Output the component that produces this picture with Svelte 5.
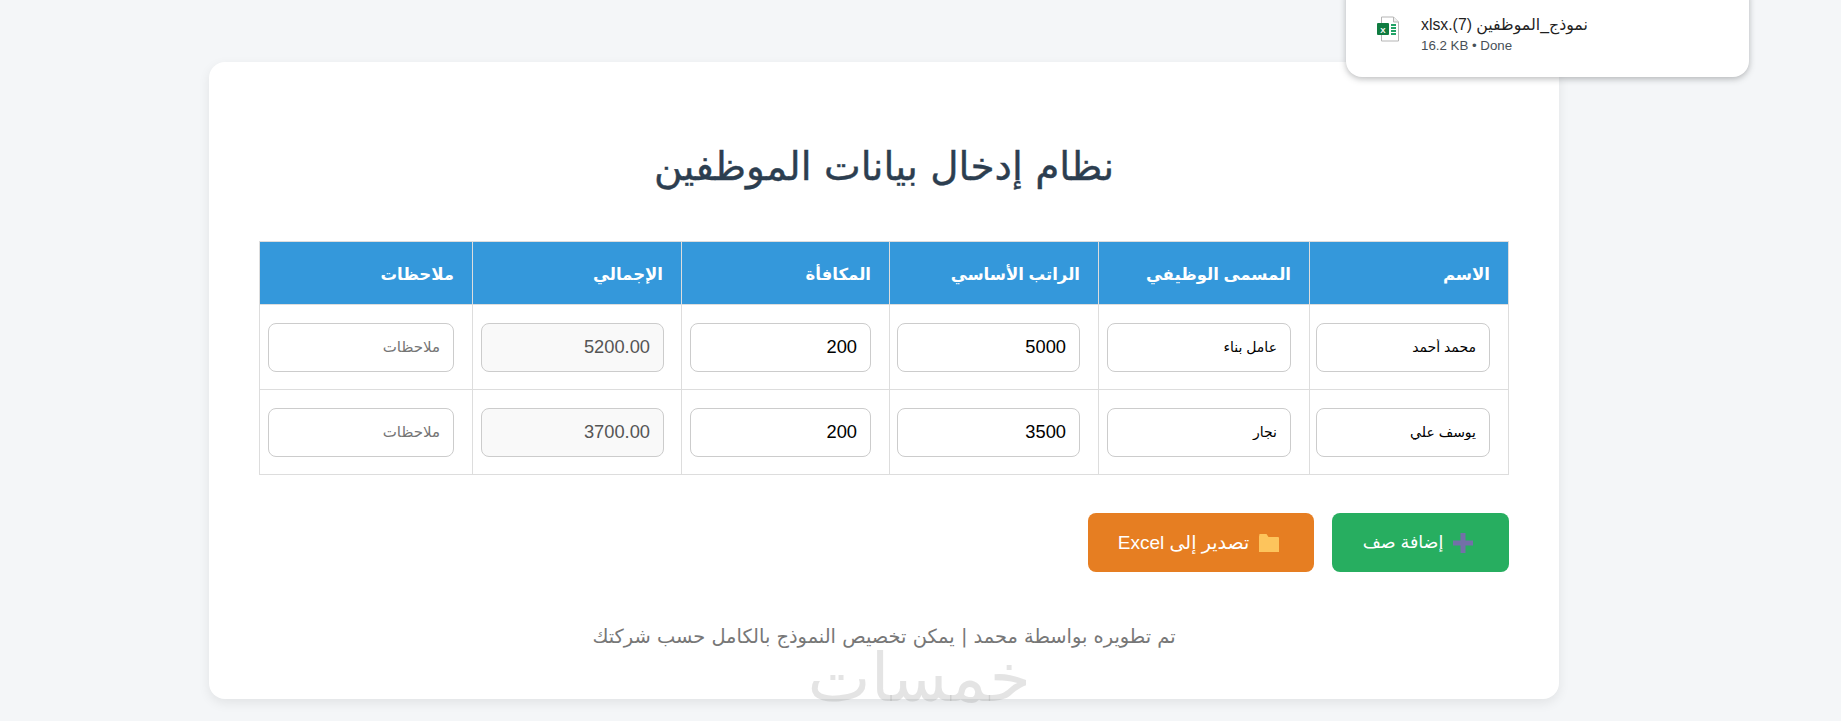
<script>
  const rows = [
    { name: 'محمد أحمد', job: 'عامل بناء', salary: '5000', bonus: '200', total: '5200.00' },
    { name: 'يوسف علي', job: 'نجار', salary: '3500', bonus: '200', total: '3700.00' }
  ];
  const headers = ['الاسم', 'المسمى الوظيفي', 'الراتب الأساسي', 'المكافأة', 'الإجمالي', 'ملاحظات'];
</script>

<div class="page">
  <div class="card" dir="rtl">
    <h1>نظام إدخال بيانات الموظفين</h1>

    <table>
      <thead>
        <tr>
          {#each headers as h}
            <th>{h}</th>
          {/each}
        </tr>
      </thead>
      <tbody>
        {#each rows as row}
          <tr>
            <td><input type="text" value={row.name} /></td>
            <td><input type="text" value={row.job} /></td>
            <td><input class="num" type="text" value={row.salary} /></td>
            <td><input class="num" type="text" value={row.bonus} /></td>
            <td><input class="num total" type="text" value={row.total} readonly /></td>
            <td><input type="text" placeholder="ملاحظات" /></td>
          </tr>
        {/each}
      </tbody>
    </table>

    <div class="actions">
      <button class="add">
        <svg width="22" height="22" viewBox="0 0 22 22"><path d="M8.5 1h5v7.5H21v5h-7.5V21h-5v-7.5H1v-5h7.5z" fill="#7370a8" /></svg>
        <span>إضافة صف</span>
      </button>
      <button class="export">
        <svg width="22" height="20" viewBox="0 0 22 20"><path d="M1 3.5 1.5 1h7l2 3H20.5l.5 1v14H1z" fill="#fdc45c" /></svg>
        <span>تصدير إلى Excel</span>
      </button>
    </div>

    <p class="footer">تم تطويره بواسطة محمد | يمكن تخصيص النموذج بالكامل حسب شركتك</p>
  </div>

  <div class="watermark" dir="rtl">خمسات</div>

  <div class="download">
    <svg width="24" height="26" viewBox="0 0 24 26">
      <path d="M5.5 1h12l5 5v19h-17z" fill="#fff" stroke="#b5b5b5" />
      <path d="M17.5 1v5h5" fill="#eee" stroke="#b5b5b5" />
      <rect x="1" y="7" width="12" height="12" rx="1" fill="#107c41" />
      <text x="7" y="16.5" class="xl">X</text>
      <path d="M15 9h5M15 12h5M15 15h5M15 18h5" stroke="#21a366" stroke-width="2" />
    </svg>
    <div class="dl-text">
      <div class="dl-name" dir="rtl">نموذج_الموظفين (7).xlsx</div>
      <div class="dl-meta">16.2 KB • Done</div>
    </div>
  </div>
</div>

<style>
  :global(body) {
    margin: 0;
    background: #f4f6f8;
  }

  .page {
    position: relative;
    height: 721px;
    overflow: hidden;
    padding-top: 62px;
    box-sizing: border-box;
    font-family: "Liberation Sans", "DejaVu Sans", sans-serif;
  }

  .card {
    width: 1350px;
    height: 637px;
    margin-left: 209px;
    padding: 0 50px;
    box-sizing: border-box;
    background: #fff;
    border-radius: 16px;
    box-shadow: 0 4px 12px rgba(0, 0, 0, 0.08);
  }

  h1 {
    margin: 0 0 47px;
    padding-top: 78px;
    line-height: 54px;
    text-align: center;
    font-size: 39px;
    font-weight: 400;
    color: #2c3e50;
    font-family: "DejaVu Sans", sans-serif;
    -webkit-text-stroke: 0.4px #2c3e50;
  }

  table {
    width: 1250px;
    table-layout: fixed;
    border-collapse: collapse;
  }

  th:nth-child(1) { width: 199px; }
  th:nth-child(2) { width: 211px; }
  th:nth-child(3) { width: 209px; }
  th:nth-child(4) { width: 208px; }
  th:nth-child(5) { width: 209px; }

  th {
    box-sizing: border-box;
    height: 63px;
    padding: 3px 18px 0;
    background: #3498db;
    color: #fff;
    border: 1px solid #ddd;
    text-align: right;
    font-size: 16.5px;
    font-weight: 700;
  }

  td {
    box-sizing: border-box;
    height: 85px;
    padding: 0 18px 0 8px;
    border: 1px solid #ddd;
  }

  td:nth-child(1) { padding-left: 6px; }
  td:nth-child(3) { padding-left: 7px; }
  td:nth-child(5) { padding-right: 17px; }

  input {
    display: block;
    width: 100%;
    height: 49px;
    box-sizing: border-box;
    padding: 0 13px;
    border: 1px solid #ccc;
    border-radius: 8px;
    background: #fff;
    font-family: "Liberation Sans", "DejaVu Sans", sans-serif;
    font-size: 14px;
    color: #000;
    text-align: right;
  }

  input::placeholder {
    color: #757575;
    font-size: 15px;
  }

  .num {
    font-size: 18.3px;
  }

  .total {
    background: #f9f9f9;
    color: #555;
  }

  .actions {
    display: flex;
    gap: 18px;
    margin-top: 38px;
  }

  button {
    display: flex;
    align-items: center;
    justify-content: center;
    gap: 9px;
    height: 59px;
    padding: 0 4px 0 0;
    border: none;
    border-radius: 8px;
    color: #fff;
    font-family: "Liberation Sans", "DejaVu Sans", sans-serif;
    font-size: 19px;
  }

  .add {
    width: 177px;
    background: #27ae60;
    font-size: 17.5px;
  }

  .export {
    width: 226px;
    background: #e67e22;
  }

  .footer {
    margin: 50px 0 0;
    text-align: center;
    font-size: 19.4px;
    line-height: 30px;
    color: #777;
    font-family: "DejaVu Sans", sans-serif;
  }

  .watermark {
    position: absolute;
    left: 810px;
    top: 656px;
    width: 221px;
    text-align: center;
    font-family: "DejaVu Sans", sans-serif;
    font-size: 67px;
    line-height: 44px;
    color: rgba(130, 130, 130, 0.22);
  }

  .download {
    position: absolute;
    top: -20px;
    left: 1346px;
    width: 403px;
    height: 97px;
    padding: 35px 0 0 30px;
    box-sizing: border-box;
    display: flex;
    gap: 21px;
    background: #fff;
    border-radius: 16px;
    box-shadow: 0 2px 6px rgba(60, 64, 67, 0.35);
  }

  .download svg {
    margin-top: 1px;
  }

  .xl {
    font: 700 8px "Liberation Sans", sans-serif;
    fill: #fff;
    text-anchor: middle;
  }

  .dl-name {
    font-size: 15.8px;
    line-height: 20px;
    color: #1f1f1f;
    text-align: right;
  }

  .dl-meta {
    margin-top: 3px;
    font-size: 13.3px;
    line-height: 16px;
    color: #474f57;
  }
</style>
